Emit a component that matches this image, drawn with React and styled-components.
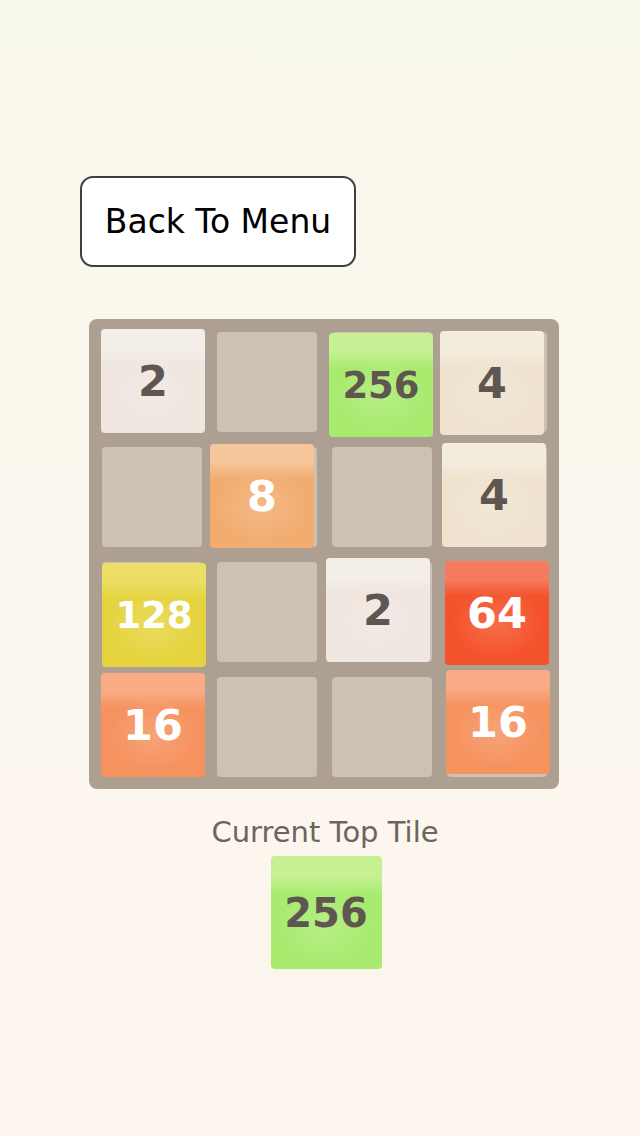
import React from "react";
import styled, { createGlobalStyle } from "styled-components";

const Global = createGlobalStyle`
  html, body { margin: 0; padding: 0; }
  body {
    min-height: 1136px;
    background: linear-gradient(180deg, #f9f8ec 0%, #fbf7ee 50%, #fdf5ef 100%);
    font-family: "DejaVu Sans", "Liberation Sans", sans-serif;
  }
`;

const Page = styled.div`
  display: flex;
  flex-direction: column;
  align-items: flex-start;
  padding-top: 176px;
  min-height: 1136px;
  box-sizing: border-box;
`;

const MenuButton = styled.button`
  margin-left: 80px;
  width: 276px;
  height: 91px;
  box-sizing: border-box;
  border: 2px solid #3f3f3f;
  border-radius: 13px;
  background: #ffffff;
  color: #000000;
  font-family: "DejaVu Sans", sans-serif;
  font-size: 33px;
  padding: 0;
  cursor: pointer;
`;

const Board = styled.div`
  margin-left: 89px;
  margin-top: 52px;
  width: 470px;
  height: 470px;
  box-sizing: border-box;
  padding: 13px;
  border-radius: 8px;
  background: #ad9f91;
  display: grid;
  grid-template-columns: repeat(4, 100px);
  grid-template-rows: repeat(4, 100px);
  gap: 15px;
`;

const Cell = styled.div`
  position: relative;
  border-radius: 4px;
  background: #cdc1b3;
`;

const palette = {
  2: { top: "#f4eee9", base: "#efe6df", text: "#5f5651" },
  4: { top: "#f3ecdf", base: "#efe3cf", text: "#5f5651" },
  8: { top: "#f6c59a", base: "#f2ac6f", text: "#ffffff" },
  16: { top: "#f8ab85", base: "#f5925e", text: "#ffffff" },
  64: { top: "#f67a5d", base: "#f4522b", text: "#ffffff" },
  128: { top: "#ecdd66", base: "#e5d43f", text: "#ffffff" },
  256: { top: "#c5f194", base: "#a8eb6f", text: "#5f5651" },
};

const TileFace = styled.div`
  position: absolute;
  left: -2px;
  top: -2px;
  width: 104px;
  height: 104px;
  border-radius: 4px;
  display: flex;
  align-items: center;
  justify-content: center;
  font-family: "DejaVu Sans", sans-serif;
  font-weight: bold;
  font-size: ${(p) => (String(p.$value).length > 2 ? 37 : 43)}px;
  color: ${(p) => palette[p.$value].text};
  background:
    radial-gradient(ellipse 45% 35% at 50% 60%, rgba(255,255,255,0.16), rgba(255,255,255,0) 100%),
    linear-gradient(180deg,
      ${(p) => palette[p.$value].top} 0%,
      ${(p) => palette[p.$value].top} 18%,
      ${(p) => palette[p.$value].base} 34%,
      ${(p) => palette[p.$value].base} 100%);
`;

const Footer = styled.div`
  margin-left: 89px;
  width: 470px;
  display: flex;
  flex-direction: column;
  align-items: center;
  margin-top: 25px;
`;

const Label = styled.div`
  font-family: "DejaVu Sans", sans-serif;
  font-size: 29px;
  line-height: 36px;
  color: #6b655e;
  transform: translateX(1px);
`;

const TopTile = styled.div`
  margin-top: 6px;
  margin-left: 4px;
  width: 111px;
  height: 113px;
  border-radius: 4px;
  display: flex;
  align-items: center;
  justify-content: center;
  font-family: "DejaVu Sans", sans-serif;
  font-weight: bold;
  font-size: 40px;
  color: #5f5651;
  background:
    radial-gradient(ellipse 45% 35% at 50% 62%, rgba(255,255,255,0.16), rgba(255,255,255,0) 100%),
    linear-gradient(180deg, #c5f194 0%, #c5f194 18%, #a8eb6f 34%, #a8eb6f 100%);
`;

// [value, dx, dy] per cell (tiles sit slightly off their slot)
const cells = [
  [2, 1, -1], null, [256, -1, 3], [4, -5, 1],
  null, [8, -5, -1], null, [4, -3, -2],
  [128, 2, 3], null, [2, -4, -2], [64, 0, 1],
  [16, 1, -2], null, null, [16, 1, -5],
];

export default function App() {
  return (
    <>
      <Global />
      <Page>
        <MenuButton>Back To Menu</MenuButton>
        <Board>
          {cells.map((c, i) => (
            <Cell key={i}>
              {c && (
                <TileFace $value={c[0]} style={{ transform: `translate(${c[1]}px, ${c[2]}px)` }}>
                  {c[0]}
                </TileFace>
              )}
            </Cell>
          ))}
        </Board>
        <Footer>
          <Label>Current Top Tile</Label>
          <TopTile>256</TopTile>
        </Footer>
      </Page>
    </>
  );
}
